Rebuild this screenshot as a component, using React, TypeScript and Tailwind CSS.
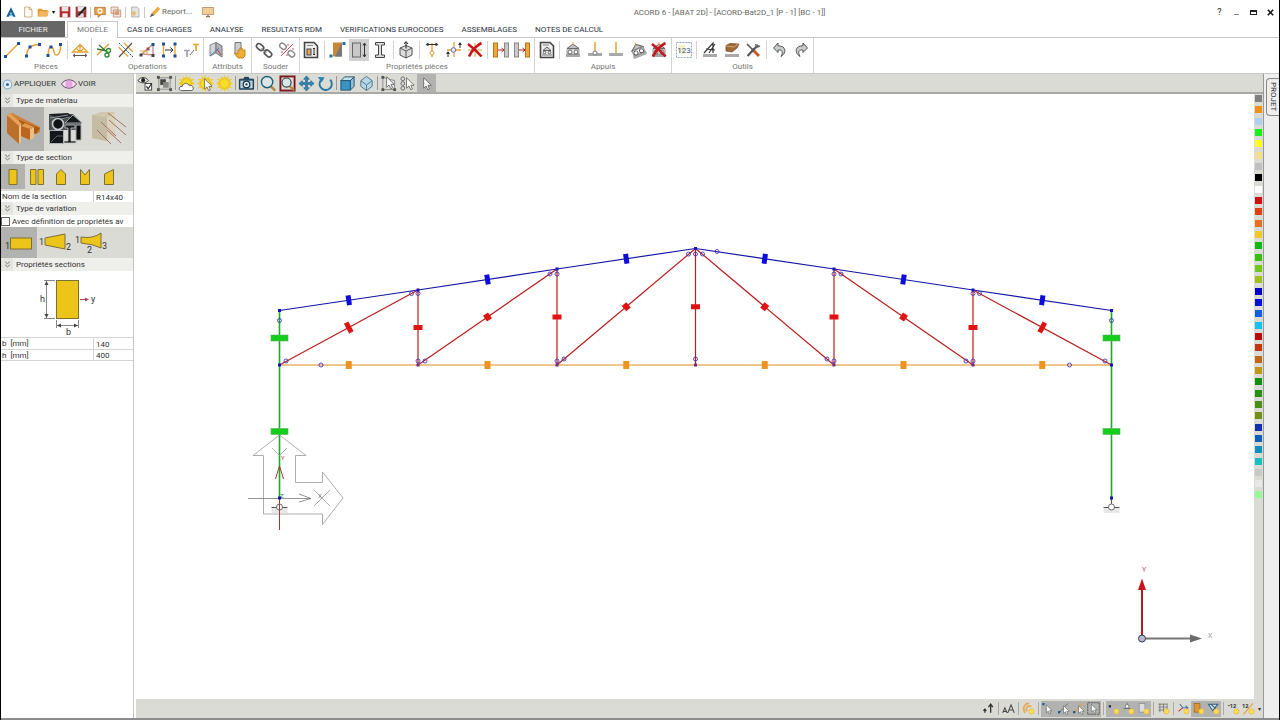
import React from 'react';

interface IconProps {
  children: React.ReactNode;
  size?: string;
}

// All toolbar drawings share an 18 unit grid
function Icon({ children, size = 'w-[18px] h-[18px]' }: IconProps) {
  return (
    <svg viewBox="0 0 18 18" className={`${size} shrink-0`} fill="none" aria-hidden="true">
      {children}
    </svg>
  );
}

const AMBER = '#e5a336';
const NAVY = '#1d4f9c';

function Dot({ x, y, c = NAVY }: { x: number; y: number; c?: string }) {
  return <rect x={x - 1.5} y={y - 1.5} width="3" height="3" fill={c} />;
}

function Bulb({ x = 13, y = 13 }: { x?: number; y?: number }) {
  return <circle cx={x} cy={y} r="3.6" fill="#ffdc58" stroke="#e2b030" strokeWidth="0.8" />;
}

const cursorPath = 'M0 0 V11 L2.6 8.6 L4.4 12.6 L6.2 11.8 L4.5 7.9 H8 Z';

function Cursor({ x, y }: { x: number; y: number }) {
  return <path d={cursorPath} transform={`translate(${x} ${y})`} fill="#fff" stroke="#555" strokeWidth="0.8" />;
}

function Ground({ y = 13 }: { y?: number }) {
  return <rect x="2" y={y} width="14" height="3" fill="#a9a9a9" />;
}

function Undo() {
  return <path d="M7 2 L2.5 7 L7 11.5 V9 C11 8.6 12.6 10.5 10 15.5 C16 11.5 15 4.8 7 4.8 Z" fill="#c9cccd" stroke="#555" />;
}

function RoofSupport() {
  return (
    <>
      <Ground />
      <path d="M9 3 L3 7.5 H15 Z" fill="#c2c2c2" stroke="#666" />
      <path d="M9 1 V4" stroke={AMBER} />
      <rect x="3" y="8" width="12" height="5" fill="#f4f4f4" stroke="#777" strokeWidth="0.7" />
      <circle cx="6" cy="11" r="2" fill="#fff" stroke="#555" strokeWidth="0.9" />
      <circle cx="12" cy="11" r="2" fill="#fff" stroke="#555" strokeWidth="0.9" />
    </>
  );
}

const redCross = <path d="M2 3 C6 6 11 10 15.5 15.5 M15.5 2 C10 5 6 9 3 15.5" stroke="#c8161b" strokeWidth="2.6" />;

interface Tool {
  name: string;
  art?: React.ReactNode;
  active?: boolean;
}

interface RibbonGroup {
  label: string;
  width: string;
  tools: Tool[];
}

const sep: Tool = { name: '' };

const ribbon: RibbonGroup[] = [
  {
    label: 'Pièces',
    width: 'w-[91px]',
    tools: [
      { name: 'Pièce droite', art: <><path d="M2.5 15.5 L15.5 2.5" stroke={AMBER} strokeWidth="1.5" /><Dot x={2.5} y={15.5} /><Dot x={15.5} y={2.5} /></> },
      { name: 'Pièce en arc', art: <><path d="M2.5 15 C3 7 8 3.5 15 3.5" stroke={AMBER} strokeWidth="1.5" /><Dot x={2.5} y={15} /><Dot x={6} y={6} /><Dot x={15.5} y={3.5} /></> },
      { name: 'Courbe', art: <><path d="M3 14 C4 2 8 5 9 11 C10 17 16 14 15.5 4" stroke={AMBER} strokeWidth="1.5" /><Dot x={3} y={14.5} /><Dot x={6} y={6} /><Dot x={15.5} y={3.5} /></> },
      sep,
      { name: 'Ferme', art: <><path d="M1.5 11 L9 3.5 L16.5 11 Z M9 3.5 V11 M5.5 7.5 L9 11 L12.5 7.5" stroke={AMBER} strokeWidth="1.3" /><path d="M2 14.5 H16 M4 13 L2 14.5 L4 16 M14 13 L16 14.5 L14 16" stroke="#555" /></> },
    ],
  },
  {
    label: 'Opérations',
    width: 'w-[112px]',
    tools: [
      { name: 'Couper', art: <><path d="M2 14 L14 3" stroke={AMBER} strokeWidth="1.5" /><path d="M4 4 L12 11 M2 8 L12 10" stroke="#367c35" strokeWidth="1.3" /><circle cx="13.5" cy="9.5" r="2" stroke="#2f8a35" strokeWidth="1.4" /><circle cx="12" cy="14" r="2" stroke="#2f8a35" strokeWidth="1.4" /></> },
      { name: 'Diviser', art: <><path d="M1.5 6 L11 15.5 M7 2 L16 11" stroke={AMBER} strokeWidth="1.3" /><path d="M2 16 L15 2" stroke="#555" strokeWidth="1.2" /><path d="M2 2 L16 16" stroke={NAVY} strokeDasharray="2 1" /></> },
      { name: 'Accrocher', art: <><path d="M4 13 L15 3 V14 Z" stroke="#b98b8d" strokeWidth="1.3" /><path d="M2 10 H9 V14" stroke={AMBER} /><Dot x={3} y={14} c="#444" /><Dot x={15} y={3.5} /><Dot x={15} y={14.5} c="#444" /><Dot x={10} y={8} c="#a54b55" /></> },
      { name: 'Étirer', art: <><path d="M3.5 2 V16 M15 2 V16" stroke={AMBER} strokeWidth="1.3" /><path d="M5 9 H13 M10.5 6.5 L13 9 L10.5 11.5" stroke="#333" /><Dot x={3.5} y={3} /><Dot x={3.5} y={15} /><Dot x={15} y={3} /><Dot x={15} y={15} /></> },
      { name: 'Copier les propriétés', art: <><path d="M2 9.5 H8 M5 9.5 V16" stroke="#a5a1b6" strokeWidth="1.7" /><path d="M11 3.5 H17 M14 3.5 V10" stroke={AMBER} strokeWidth="1.7" /><path d="M8 14 L12 9" stroke="#777" /></> },
    ],
  },
  {
    label: 'Attributs',
    width: 'w-[48px]',
    tools: [
      { name: 'Repère', art: <><path d="M3 4 L9 1.5 V12 L3 15 Z" fill="#d1d4d7" stroke="#888" /><path d="M9 1.5 L15 5 V16 L9 12 Z" fill="#aeb4bb" stroke="#777" /><path d="M3 15 L12 7" stroke="#367da7" /><path d="M10 8 L14 14" stroke="#cf3339" /></> },
      { name: 'Attribut', art: <><path d="M5 1.5 H11 V13 H5 Z" fill="#cdcdcd" stroke="#777" /><path d="M4 12 L8 13 V9 H10 V7 H12 V9 H15 V15 L13 17 H8 Z" fill="#efae35" stroke="#c58520" /></> },
    ],
  },
  {
    label: 'Souder',
    width: 'w-[48px]',
    tools: [
      { name: 'Souder', art: <><rect x="1" y="3.5" width="8" height="5" rx="2.5" transform="rotate(40 5 6)" stroke="#555" strokeWidth="1.7" /><rect x="9" y="10" width="8" height="5" rx="2.5" transform="rotate(40 13 12.5)" stroke="#555" strokeWidth="1.7" /><path d="M6.5 7.5 L11.5 11.5" stroke="#777" strokeWidth="1.5" /></> },
      { name: 'Dessouder', art: <><rect x="1" y="3" width="7" height="5" rx="2.5" transform="rotate(40 5 6)" stroke="#888" strokeWidth="1.4" /><rect x="10" y="10" width="7" height="5" rx="2.5" transform="rotate(40 13 12.5)" stroke="#888" strokeWidth="1.4" /><path d="M3 15 L15 3 M10 3 V5 M14 8 H16 M3 11 H5 M9 13 V15" stroke="#d64a57" /></> },
    ],
  },
  {
    label: 'Propriétés pièces',
    width: 'w-[235px]',
    tools: [
      { name: 'Fiche pièce', art: <><path d="M2.5 1.5 H12 L15.5 5 V16.5 H2.5 Z" fill="#eee" stroke="#444" strokeWidth="1.6" /><path d="M5 4.5 H11" stroke="#888" /><rect x="5" y="8" width="4" height="6" fill="#e5a65a" stroke="#444" /><path d="M12 7 V14 M11 8 L12 7 L13 8 M11 13 L12 14 L13 13" stroke="#333" /></> },
      sep,
      { name: 'Matériau', art: <><rect x="5" y="1.5" width="9" height="14" fill="#c9873c" /><path d="M14 1.5 V15.5 H7 Z" fill="#777" /><Dot x={3} y={15} c="#2574a8" /><Dot x={16} y={2.5} c="#2574a8" /></> },
      { name: 'Section', active: true, art: <><rect x="2.5" y="2" width="8" height="14" fill="#c8c8c8" stroke="#666" /><path d="M14.5 2 V16 M13 4.5 L14.5 2 L16 4.5 M13 13.5 L14.5 16 L16 13.5" stroke="#333" /></> },
      { name: 'Profil', art: <path d="M4.5 1.5 H13.5 V4 H10.5 V14 H13.5 V16.5 H4.5 V14 H7.5 V4 H4.5 Z" fill="#ddd" stroke="#444" /> },
      sep,
      { name: 'Orientation', art: <><path d="M3 7 L9 4.5 L15 7 V14 L9 17 L3 14 Z" fill="#ddd" stroke="#555" /><path d="M3 7 L9 10 L15 7 M9 10 V17" stroke="#555" /><path d="M9 7.5 V1 M7 3 L9 0.5 L11 3" stroke="#222" /></> },
      sep,
      { name: 'Relaxations', art: <><path d="M9 2 V16" stroke={AMBER} strokeWidth="1.4" /><path d="M4 3.5 H14" stroke="#333" /><path d="M5.5 1.5 L2.5 3.5 L5.5 5.5 Z M12.5 1.5 L15.5 3.5 L12.5 5.5 Z" fill="#333" /><circle cx="9" cy="12" r="2" fill="#fff" stroke={AMBER} /></> },
      { name: 'Excentrement', art: <><path d="M9 1 V16 M2 9 H16" stroke={AMBER} strokeWidth="1.3" /><path d="M3 11 V16 M15 2 V7" stroke="#333" /><path d="M1 13 L3 10 L5 13 Z M13 4 L15 1 L17 4 Z" fill="#333" /><circle cx="8.5" cy="9" r="2.3" fill="#e9e9f2" stroke="#6973a2" /></> },
      { name: 'Supprimer les relaxations', art: <><path d="M9 2 V16 M2 9 H16" stroke={AMBER} />{redCross}</> },
      sep,
      { name: 'Extrémité gauche', art: <><rect x="1.5" y="2" width="4" height="14" fill="#f0a83c" stroke="#b8741c" /><rect x="12.5" y="2" width="4" height="14" fill="#c9c9c9" stroke="#888" /><path d="M6 9 H12 M9.5 7 L12 9 L9.5 11" stroke="#b82228" /></> },
      { name: 'Extrémité droite', art: <><rect x="1.5" y="2" width="4" height="14" fill="#c9c9c9" stroke="#888" /><rect x="12.5" y="2" width="4" height="14" fill="#f0a83c" stroke="#b8741c" /><path d="M6 9 H12 M9.5 7 L12 9 L9.5 11" stroke="#b82228" /></> },
    ],
  },
  {
    label: 'Appuis',
    width: 'w-[137px]',
    tools: [
      { name: 'Fiche appui', art: <><path d="M2.5 1.5 H12 L15.5 5 V16.5 H2.5 Z" fill="#eee" stroke="#444" strokeWidth="1.6" /><path d="M5 4 H11" stroke="#888" /><path d="M9 6 L5 9.5 H13 Z" fill="#ccc" stroke="#444" strokeWidth="0.8" /><circle cx="6.5" cy="11.5" r="1.3" stroke="#444" strokeWidth="0.8" /><circle cx="11.5" cy="11.5" r="1.3" stroke="#444" strokeWidth="0.8" /><path d="M4 14 H14" stroke="#777" /></> },
      sep,
      { name: 'Appui simple', art: <RoofSupport /> },
      { name: 'Appui rotule', art: <><path d="M9 1 V12" stroke={AMBER} strokeWidth="1.5" /><Ground y={12} /><circle cx="9" cy="12" r="2" fill="#fff" stroke="#777" /></> },
      { name: 'Encastrement', art: <><path d="M9 1 V12" stroke={AMBER} strokeWidth="1.5" /><Ground y={12} /></> },
      { name: 'Appui incliné', art: <g transform="rotate(-22 9 9)"><RoofSupport /></g> },
      { name: 'Supprimer un appui', art: <><RoofSupport />{redCross}</> },
    ],
  },
  {
    label: 'Outils',
    width: 'w-[142px]',
    tools: [
      { name: 'Numérotation', art: <><rect x="1.5" y="1.5" width="15" height="15" stroke="#8ca6c4" strokeDasharray="2 1" /><path d="M3 4 H10 V13 H4 Z" fill="#f5efc8" /><text x="9" y="12" textAnchor="middle" fontSize="8" fontFamily="Roboto, sans-serif" fill="#33557d">123</text></> },
      sep,
      { name: 'Mesurer', art: <><Ground /><path d="M3 12 L12 2 V12 M5 8 L14 9 M8 12 L14 3" stroke="#333" strokeWidth="1.2" /></> },
      { name: 'Pièce au sol', art: <><Ground /><path d="M3 4.5 L7 2.5 L16 3 L14 7 L9 11 L3 10 Z" fill="#a36a39" stroke="#704520" strokeWidth="0.7" /><path d="M3 5 L11 6 L15 3" stroke="#d4a577" /></> },
      { name: 'Options', art: <><path d="M8 8 L15 15" stroke="#c75b2c" strokeWidth="3" /><path d="M3 3 L9 9" stroke="#555" strokeWidth="1.6" /><path d="M14 4 L3.5 15" stroke="#555" strokeWidth="2.2" /><path d="M11.5 3 L13 6 L16 5" stroke="#666" strokeWidth="1.5" /></> },
      sep,
      { name: 'Annuler', art: <Undo /> },
      { name: 'Rétablir', art: <g transform="matrix(-1 0 0 1 18 0)"><Undo /></g> },
    ],
  },
];

const sunRays = 'M9 0 L10.3 3.4 L13 1 L13 4.6 L17 4 L14.7 7 L18 9 L14.7 11 L17 14 L13 13.4 L13 17 L10.3 14.6 L9 18 L7.7 14.6 L5 17 L5 13.4 L1 14 L3.3 11 L0 9 L3.3 7 L1 4 L5 4.6 L5 1 L7.7 3.4 Z';
const sun = <><path d={sunRays} fill="#f0cc30" /><circle cx="9" cy="9" r="5" fill="#fbdc28" stroke="#dcb420" strokeWidth="0.6" /></>;

const viewTools: Tool[] = [
  { name: 'Visibilité', art: <><path d="M1 6 C4 1.5 9 1.5 12 6 C9 9 4 9 1 6 Z" fill="#f7f7f7" stroke="#333" /><circle cx="6.5" cy="5.5" r="2.2" fill="#222" /><rect x="8.5" y="9" width="7" height="7" fill="#fff" stroke="#444" /><path d="M10 12 L11.8 14.5 L15.5 9" stroke="#222" strokeWidth="1.2" /></> },
  { name: 'Isoler', art: <><rect x="3" y="3" width="12" height="12" stroke="#8a8a8a" /><rect x="4.5" y="4.5" width="6" height="6" fill="#444" /><rect x="7.5" y="7.5" width="6" height="6" fill="#888" /><Dot x={2.5} y={2.5} c="#555" /><Dot x={15.5} y={2.5} c="#555" /><Dot x={2.5} y={15.5} c="#555" /><Dot x={15.5} y={15.5} c="#555" /></> },
  sep,
  { name: 'Masquer', art: <>{sun}<path d="M4 16.5 C0 16.5 0.5 11.5 4.5 12 C5 8 11 8 11.5 11 C16 9.5 18 16.5 14 16.5 Z" fill="#fff" stroke="#555" /></> },
  { name: 'Afficher la sélection', art: <>{sun}<Cursor x={8} y={4} /></> },
  { name: 'Tout afficher', art: sun },
  sep,
  { name: 'Photo', art: <><path d="M1.5 4.5 H6 L7 2.5 H11 L12 4.5 H16.5 V15 H1.5 Z" fill="#214a68" stroke="#17364d" /><rect x="2.5" y="6" width="13" height="8" fill="#bcd0dd" /><circle cx="9" cy="10" r="3.5" fill="#e7eef3" stroke="#17364d" strokeWidth="1.4" /><circle cx="9" cy="10" r="1.2" fill="#17364d" /></> },
  sep,
  { name: 'Zoom', art: <><path d="M11.5 12 L16 16.5" stroke="#b28a37" strokeWidth="2.6" /><circle cx="7.5" cy="7.5" r="6" fill="#d9e6e7" stroke="#245f78" strokeWidth="1.5" /></> },
  { name: 'Zoom étendu', art: <><rect x="1.5" y="1.5" width="15" height="15" stroke="#7b171b" strokeWidth="2" /><path d="M11.5 12 L16 16" stroke="#b28a37" strokeWidth="2.4" /><circle cx="8" cy="8" r="4.8" fill="#d9e6e7" stroke="#333f49" strokeWidth="1.2" /></> },
  { name: 'Déplacer', art: <><path d="M9 1 L12 4.5 H10 V8 H13.5 V6 L17 9 L13.5 12 V10 H10 V13.5 H12 L9 17 L6 13.5 H8 V10 H4.5 V12 L1 9 L4.5 6 V8 H8 V4.5 H6 Z" fill="#3289b6" stroke="#205e80" strokeWidth="0.7" /></> },
  { name: 'Tourner', art: <><path d="M4 5.5 A6.5 6.5 0 1 0 14 5" stroke="#2376a3" strokeWidth="2" /><path d="M1 2 L8 2.5 L5 8 Z" fill="#2b82af" /></> },
  sep,
  { name: 'Vue 3D', art: <><path d="M2 6 L6 2 H16 L12 6 Z" fill="#c4e0ef" stroke="#23536f" /><path d="M12 6 L16 2 V12 L12 16 Z" fill="#8fc1da" stroke="#23536f" /><rect x="2" y="6" width="10" height="10" fill="#3a94c4" stroke="#23536f" /></> },
  { name: 'Vue isométrique', art: <><path d="M9 1.5 L15 6 V12 L9 16.5 L3 12 V6 Z" fill="#b8d6e3" stroke="#47778f" /><path d="M3 6 L9 10.5 L15 6 M9 10.5 V16" stroke="#47778f" /></> },
  sep,
  { name: 'Sélection polygone', art: <><path d="M3 2.5 L15.5 6 V15.5 H3 Z" stroke="#777" strokeWidth="0.8" /><Dot x={3} y={2.5} c="#555" /><Dot x={3} y={15.5} c="#555" /><Dot x={15.5} y={15.5} c="#555" /><Cursor x={7} y={2} /></> },
  { name: 'Sélection multiple', art: <><circle cx="4" cy="4" r="2" fill="#ddd" stroke="#666" /><circle cx="4" cy="9" r="2" fill="#ddd" stroke="#666" /><circle cx="4" cy="14" r="2" fill="#ddd" stroke="#666" /><Cursor x={8} y={3} /></> },
  { name: 'Sélection', active: true, art: <Cursor x={6} y={3} /> },
];

const statusTools: Tool[] = [
  { name: 'Décaler', art: <path d="M4 15 V10 M2 12 L4 10 L6 12 M12 15 V4 M9 7 L12 3 L15 7" stroke="#333" strokeWidth="1.8" /> },
  sep,
  { name: 'Taille du texte', art: <path d="M1 15 L4 8 L7 15 M2 13 H6 M8 15 L12.5 4 L17 15 M9.5 11 H15.5" stroke="#444" strokeWidth="1.4" /> },
  sep,
  { name: 'Main', art: <><path d="M4 15 C0 8 4 2 10 2 M7 13 C4 8 8 5 13 6" stroke="#e8a75a" strokeWidth="2.4" /><Bulb /></> },
  sep,
  { name: 'Accrochage point', active: true, art: <><Dot x={2} y={3} /><Cursor x={6} y={4} /></> },
  { name: 'Accrochage ligne', active: true, art: <><path d="M2 16 L15 2" stroke="#666" strokeWidth="1.3" /><Dot x={3} y={14} /><Cursor x={9} y={5} /></> },
  { name: 'Accrochage milieu', active: true, art: <><path d="M2 16 L15 2" stroke={AMBER} strokeWidth="1.6" /><Dot x={3} y={14} /><Cursor x={9} y={5} /></> },
  { name: 'Sélection fenêtre', active: true, art: <><rect x="1" y="1" width="16" height="16" stroke="#555" strokeWidth="1.3" strokeDasharray="3 1" /><Cursor x={6} y={3} /></> },
  sep,
  { name: 'Voir nœuds', active: true, art: <><Dot x={4} y={6} c="#222" /><Bulb /></> },
  { name: 'Voir appuis', active: true, art: <><path d="M7 1 V6 M2 9 H12" stroke="#555" /><circle cx="7" cy="6" r="2.5" fill="#fff" stroke="#666" /><Bulb /></> },
  { name: 'Voir sections', active: true, art: <><rect x="3" y="2" width="8" height="12" fill="#ddd" stroke="#888" /><Bulb /></> },
  sep,
  { name: 'Voir grille', art: <><path d="M2 3 H14 M2 7 H14 M2 11 H14 M4 2 V14 M9 2 V14 M14 2 V14" stroke="#666" /><Bulb /></> },
  sep,
  { name: 'Voir repères', art: <><path d="M4 3 L8 8 H15 M12 5 L15 8 L12 11" stroke="#4578a8" strokeWidth="1.6" /><path d="M8 8 L2 13" stroke="#c33" strokeWidth="1.4" /><Bulb /></> },
  { name: 'Voir matériaux', active: true, art: <><rect x="3" y="2" width="8" height="12" fill="#dc9638" stroke="#99621c" /><Bulb /></> },
  { name: 'Voir assemblages', active: true, art: <><path d="M2 3 H15 L8 12 Z M5 3 L12 9" fill="#d9e3e9" stroke="#31617d" strokeWidth="1.4" /><Bulb /></> },
  sep,
  { name: 'Numéros nœuds', art: <><text x="1" y="8" fontSize="8" fontWeight="bold" fontFamily="Roboto, sans-serif" fill="#333">•12</text><Bulb /></> },
  { name: 'Numéros pièces', art: <><path d="M2 17 L15 2" stroke={AMBER} strokeWidth="1.5" /><text x="0" y="8" fontSize="8" fontWeight="bold" fontFamily="Roboto, sans-serif" fill="#333">12</text><Bulb /></> },
];

const tabs = ['CAS DE CHARGES', 'ANALYSE', 'RESULTATS RDM', 'VERIFICATIONS EUROCODES', 'ASSEMBLAGES', 'NOTES DE CALCUL'];

const swatches = [
  '#808080', '#f09018', '#b0d0f0', '#18f018', '#ffff20', '#f0e090', '#c0c0c0', '#000000', '#ffffff',
  '#d01010', '#e04010', '#e87020', '#f0c828', '#10b810', '#38c010', '#70c818', '#a0c020', '#0000c8',
  '#0010d8', '#1060e0', '#18c0f0', '#b80808', '#c03810', '#c06818', '#c09818', '#109010', '#289010',
  '#489018', '#709018', '#1030b0', '#1060b8', '#1090c0', '#18c0c0', '#c8c8c8', '#e8e8e8', '#98f898',
];

function TitleBar() {
  const btn = 'w-4 h-4 flex items-center justify-center';
  const small = 'w-3 h-3';
  return (
    <header className="h-[21px] pt-[3px] flex items-center">
      <div className="flex items-center text-[#666]">
        <span className="w-[19px] flex justify-center">
          <Icon size={small}><path d="M9 2 L2 16 H6 L9 9 L12 16 H16 Z" fill="#1a5f8e" /><path d="M7 12 H11 L9 16 Z" fill="#20a7c5" /></Icon>
        </span>
        <button className={btn} aria-label="Nouveau"><Icon size={small}><path d="M4 1.5 H11 L15 5.5 V16.5 H4 Z M11 1.5 V5.5 H15" fill="#fffdf6" stroke="#b08b52" /></Icon></button>
        <button className="w-[14px] h-4 flex items-center justify-center" aria-label="Ouvrir"><Icon size={small}><path d="M1 4 H7 L9 6 H16 V15 H1 Z" fill="#e39a36" /><path d="M4 8 H18 L15 16 H1 Z" fill="#f2b55a" /></Icon></button>
        <span className="w-[7px] text-center text-[6px] leading-none text-black">▾</span>
        <button className={btn} aria-label="Enregistrer"><Icon size={small}><path d="M1 1 H17 V17 H1 Z" fill="#b3262c" /><rect x="4" y="1" width="10" height="7" fill="#e9e4e1" /><rect x="5" y="11" width="8" height="6" fill="#f4f4f4" /></Icon></button>
        <button className={btn} aria-label="Enregistrer sous"><Icon size={small}><path d="M1 1 H17 V17 H1 Z" fill="#9c3536" /><rect x="4" y="1" width="10" height="7" fill="#e9e4e1" /><rect x="5" y="11" width="8" height="6" fill="#ddd" /><path d="M5 14 L16 2" stroke="#222" strokeWidth="3" /></Icon></button>
        <span className="w-px h-[11px] mx-px bg-[#d6c4bb]" />
        <button className={btn} aria-label="Paramètres"><Icon size={small}><path d="M1 2 H17 V13 H11 L6 17 V13 H1 Z" fill="#e4a14b" stroke="#a66b28" /><circle cx="9" cy="7.5" r="3" stroke="#fff" strokeWidth="2" /></Icon></button>
        <button className={btn} aria-label="Copier"><Icon size={small}><path d="M1.5 1.5 H12 V11 H1.5 Z M5 6 H16 V16.5 H5 Z" fill="#f5e4da" stroke="#a7796b" /><path d="M7 9 H14 M7 12 H14" stroke="#e08c62" strokeWidth="2" /></Icon></button>
        <span className="w-px h-[11px] mx-px bg-[#d6c4bb]" />
        <button className={btn} aria-label="Importer"><Icon size={small}><path d="M4 1.5 H12 L15 5 V16.5 H4 Z" fill="#e4e4e4" stroke="#999" /><circle cx="7" cy="11" r="3.5" fill="#e9bd78" /></Icon></button>
        <span className="w-px h-[11px] mx-px bg-[#d6c4bb]" />
        <button className="h-4 flex items-center pl-[3px] text-[8px]">
          <Icon size={small}><path d="M4 11 L13 1 L17 4 L8 14 Z" fill="#f1a93b" /><path d="M4 11 L8 14 L1 17 Z" fill="#555" /></Icon>
          <span className="pl-px">Report...</span>
        </button>
        <button className="w-[32px] h-4 flex items-center justify-center" aria-label="Écran"><Icon size={small}><rect x="1" y="2" width="16" height="11" fill="#f1cd97" stroke="#ac7c45" /><path d="M6 16 H12 M9 13 V16" stroke="#8b7050" strokeWidth="2" /></Icon></button>
      </div>
      <h1 className="flex-1 pl-6 pt-px text-center text-[8px] text-[#666]">ACORD 6 - [ABAT 2D] - [ACORD-Bat2D_1 [P - 1] [BC - 1]]</h1>
      <div className="flex text-[9px] text-[#222]">
        <button className="w-[17px]" aria-label="Aide">?</button>
        <button className="w-[17px] flex items-center justify-center" aria-label="Réduire"><span className="w-[5px] h-px mt-1 bg-[#888]" /></button>
        <button className="w-[17px] flex items-center justify-center" aria-label="Agrandir"><span className="w-[7px] h-[5px] border border-t-2 border-[#222]" /></button>
        <button className="w-[17px] flex items-center justify-center" aria-label="Fermer"><Icon size="w-[7px] h-[7px]"><path d="M2 2 L16 16 M16 2 L2 16" stroke="#111" strokeWidth="4" /></Icon></button>
      </div>
    </header>
  );
}

function TabBar() {
  return (
    <nav className="h-[17px] flex items-stretch border-b border-[#c6c6c6] text-[8px] text-[#2b3442]">
      <button className="w-[64px] pt-px bg-[#666] text-[#eee]">FICHIER</button>
      <button className="w-[51px] ml-[2px] -mb-px border border-b-0 border-[#c6c6c6] bg-white text-[#777]">MODÈLE</button>
      {tabs.map((tab) => (
        <button key={tab} className="px-[9px] pt-px whitespace-nowrap">{tab}</button>
      ))}
    </nav>
  );
}

function Ribbon() {
  return (
    <div className="h-[36px] flex border-b border-[#c9c9c9] text-[#777]">
      {ribbon.map((group) => (
        <section key={group.label} aria-label={group.label} className={`${group.width} flex flex-col border-r border-[#d4d4d4]`}>
          <div className="h-6 flex items-center justify-evenly">
            {group.tools.map((tool, i) =>
              tool.art ? (
                <button
                  key={i}
                  aria-label={tool.name}
                  className={`w-[20px] h-[22px] flex items-center justify-center ${tool.active ? 'bg-[#d0d0d0]' : ''}`}
                >
                  <Icon>{tool.art}</Icon>
                </button>
              ) : (
                <span key={i} className="w-px h-[18px] mx-px bg-[#dccfd2]" />
              )
            )}
          </div>
          <p className="text-center text-[8px] leading-[12px]">{group.label}</p>
        </section>
      ))}
    </div>
  );
}

function PanelHeader({ children }: { children: React.ReactNode }) {
  return (
    <h2 className="h-[13px] flex items-center bg-[#efefec] text-[8px]">
      <span className="w-[12px] h-full mr-[3px] flex items-center justify-center bg-[#e4e4e0]">
        <Icon size="w-[7px] h-[7px]"><path d="M3 2 L9 7 L15 2 M3 10 L9 15 L15 10" stroke="#555" strokeWidth="2" /></Icon>
      </span>
      <span className="pt-px">{children}</span>
    </h2>
  );
}

const gold = { fill: '#ecc41a', stroke: '#7d7034' };

const sectionShapes = [
  { name: 'Rectangulaire', path: 'M5 1.5 H13 V16.5 H5 Z' },
  { name: 'Double', path: 'M2.5 1.5 H8 V16.5 H2.5 Z M10 1.5 H15.5 V16.5 H10 Z' },
  { name: 'Faîtage', path: 'M9 1.5 L13.5 6 V16.5 H4.5 V6 Z' },
  { name: 'Noue', path: 'M4.5 1.5 L9 7 L13.5 1.5 V16.5 H4.5 Z' },
  { name: 'Biaise', path: 'M4.5 6 L13.5 1.5 V16.5 H4.5 Z' },
];

function SidePanel() {
  return (
    <aside className="w-[133px] shrink-0 flex flex-col border-r border-[#c4c4c0] bg-white text-[8px] text-[#333]">
      <div className="h-[20px] flex items-center bg-[#dadbd5] text-[8px]">
        <button className="flex items-center">
          <span className="w-[13px] flex justify-center"><Icon size="w-[11px] h-[11px]"><circle cx="9" cy="9" r="7" fill="#e4eff6" stroke="#8ab4cf" strokeWidth="2" /><circle cx="9" cy="9" r="2.5" fill="#286a97" /></Icon></span>
          APPLIQUER
        </button>
        <button className="flex items-center pl-[5px]">
          <svg viewBox="0 0 16 10" className="w-4 h-[10px] mr-px" aria-hidden="true">
            <path d="M0.5 5 C4 -0.5 12 -0.5 15.5 5 C12 10.5 4 10.5 0.5 5 Z" fill="#f3e6f3" stroke="#66426f" />
            <circle cx="8" cy="5" r="3.6" fill="#eaa3e2" />
          </svg>
          VOIR
        </button>
      </div>

      <PanelHeader>Type de matériau</PanelHeader>
      <div className="h-[44px] flex bg-[#dadbd5]">
        <button aria-label="Bois" className="w-[43px] flex items-center justify-center bg-[#b2b3b1]">
          <svg viewBox="0 0 36 34" className="w-9 h-[34px]" aria-hidden="true">
            <path d="M3 2 L7 1 L35 15 V20 L31 22 L8 12 Z" fill="#cf8036" />
            <path d="M14 8 L35 16 L31 22 L26 20 L14 14 Z" fill="#a85a1c" />
            <path d="M2 3 L14 14 V32 L2 21 Z" fill="#bc6f29" />
            <path d="M14 14 L16 12 V30 L14 32 Z" fill="#f0c084" />
            <path d="M2 3 L5 1 L17 12 L14 14 Z" fill="#e6a358" />
            <path d="M16 14 L25 17 V28 L16 24 Z" fill="#b9651e" />
            <path d="M25 17 L29 15 V26 L25 28 Z" fill="#efbd80" />
            <path d="M16 14 L20 11 L29 15 L25 17 Z" fill="#e39c4d" />
          </svg>
        </button>
        <button aria-label="Acier" className="w-[43px] flex items-center justify-center">
          <svg viewBox="0 0 36 34" className="w-9 h-[34px]" aria-hidden="true">
            <path d="M1 2 H25 L33 11 V18 H1 Z" fill="#4b5052" />
            <path d="M1 2 L20 1 L25 5 L12 8 Z" fill="#1c2022" />
            <path d="M2 6 L20 3 M4 9 L22 5" stroke="#8f9596" />
            <rect x="1.5" y="18.5" width="14" height="13" fill="#14181b" stroke="#aeb3b4" />
            <path d="M3 30 L9 24 H15" stroke="#5c6163" fill="none" />
            <circle cx="10" cy="12" r="5.5" fill="#101316" stroke="#c8cccd" strokeWidth="1.6" />
            <path d="M17 11 L25 3 L34 11 Z" fill="#17191b" stroke="#9ca1a2" />
            <path d="M17 13 H27 V16 H23 V29 H28 V31 H16 V29 H20 V16 H17 Z" fill="#1a1d1f" stroke="#c8cccd" strokeWidth="0.8" />
            <path d="M28 13 H33 V28 H28 Z" fill="#0c0e10" stroke="#aaa" />
          </svg>
        </button>
        <button aria-label="Béton" className="w-[43px] flex items-center justify-center">
          <svg viewBox="0 0 36 34" className="w-9 h-[34px]" aria-hidden="true">
            <path d="M1 3 L10 0 H24 V22 L16 29 L1 26 Z" fill="#d0c7ae" />
            <path d="M1 3 L16 6 V29 L1 26 Z" fill="#c5bda3" />
            <path d="M16 6 L24 0 V22 L16 29 Z" fill="#dbd3bd" />
            <path d="M6 18 L20 32 M10 10 L25 24 M16 18 L30 31 M17 1 L35 15 M18 8 L35 23" stroke="#9d6654" strokeWidth="0.9" />
          </svg>
        </button>
      </div>

      <PanelHeader>Type de section</PanelHeader>
      <div className="h-[27px] flex bg-[#dadbd5]">
        {sectionShapes.map((shape, i) => (
          <button key={shape.name} aria-label={shape.name} className={`w-[24px] h-[25px] flex items-center justify-center ${i === 0 ? 'bg-[#b2b3b1]' : ''}`}>
            <Icon><path d={shape.path} {...gold} /></Icon>
          </button>
        ))}
      </div>
      <label className="h-[11px] flex items-center bg-white">
        <span className="w-[92px] pl-px pt-px">Nom de la section</span>
        <input defaultValue="R14x40" className="w-[40px] h-[11px] pl-[2px] pt-px border-l border-[#ccc] outline-none" />
      </label>

      <PanelHeader>Type de variation</PanelHeader>
      <label className="h-3 flex items-center whitespace-nowrap overflow-hidden bg-white">
        <input type="checkbox" className="appearance-none w-[9px] h-[9px] mr-[2px] shrink-0 border border-[#666] bg-white" />
        <span className="pt-px">Avec définition de propriétés av</span>
      </label>
      <div className="h-[31px] flex bg-[#dadbd5] text-[#333]">
        <button aria-label="Constante" className="w-[36px] flex items-center justify-center bg-[#b2b3b1]">
          <svg viewBox="0 0 34 24" className="w-[34px] h-6" fontSize="9" fontFamily="Roboto, sans-serif" aria-hidden="true">
            <text x="3" y="18" fill="#333">1</text>
            <rect x="8.5" y="7" width="21" height="11" {...gold} />
          </svg>
        </button>
        <button aria-label="Linéaire" className="w-[36px] flex items-center justify-center">
          <svg viewBox="0 0 34 24" className="w-[34px] h-6" fontSize="9" fontFamily="Roboto, sans-serif" aria-hidden="true">
            <text x="1" y="14" fill="#333">1</text>
            <path d="M7 7 L27 3 V18 L7 14 Z" {...gold} />
            <text x="28" y="19" fill="#333">2</text>
          </svg>
        </button>
        <button aria-label="Courbe" className="w-[36px] flex items-center justify-center">
          <svg viewBox="0 0 34 24" className="w-[34px] h-6" fontSize="9" fontFamily="Roboto, sans-serif" aria-hidden="true">
            <text x="1" y="12" fill="#333">1</text>
            <path d="M7 6 Q19 8 27 2 V17 Q19 13 7 12 Z" {...gold} />
            <text x="13" y="22" fill="#333">2</text>
            <text x="28" y="18" fill="#333">3</text>
          </svg>
        </button>
      </div>

      <PanelHeader>Propriétés sections</PanelHeader>
      <div className="h-[66px] flex justify-center">
        <svg viewBox="0 0 70 66" className="w-[70px] h-[66px]" fontSize="9" fontFamily="Roboto, sans-serif" aria-hidden="true">
          <rect x="24.5" y="9.5" width="22" height="38" {...gold} />
          <path d="M12 9.5 H23 M12 47.5 H23 M14.5 10 V47 M24.5 49 V57 M46.5 49 V57 M25 54.5 H46" stroke="#888" fill="none" />
          <path d="M14.5 10 l-2 4 h4 Z M14.5 47 l-2 -4 h4 Z M25 54.5 l4 -2 v4 Z M46 54.5 l-4 -2 v4 Z" fill="#444" />
          <path d="M48 28.5 H56" stroke="#a8485a" />
          <path d="M57 28.5 l-4 -2 v4 Z" fill="#a8485a" />
          <text x="8" y="31" fill="#333">h</text>
          <text x="59" y="31" fill="#333">y</text>
          <text x="34" y="64" fill="#333">b</text>
        </svg>
      </div>
      {[['b', '140'], ['h', '400']].map(([key, value]) => (
        <label key={key} className="h-3 flex items-center border-t border-[#d4d4d4] last:border-b">
          <span className="w-[92px] pl-px pt-px whitespace-pre">{key}  [mm]</span>
          <input defaultValue={value} className="w-[40px] h-full pl-[2px] pt-px border-l border-[#d4d4d4] outline-none" />
        </label>
      ))}
    </aside>
  );
}

function ViewToolbar() {
  return (
    <div className="h-[20px] flex items-center border-b-2 border-[#a9aaa6] bg-[#dadbd5]">
      {viewTools.map((tool, i) =>
        tool.art ? (
          <button key={i} aria-label={tool.name} className={`w-[19px] h-[18px] flex items-center justify-center ${tool.active ? 'bg-[#b2b3b1]' : ''}`}>
            <Icon size="w-[17px] h-[17px]">{tool.art}</Icon>
          </button>
        ) : (
          <span key={i} className="w-px h-[14px] mx-px bg-[#999]" />
        )
      )}
    </div>
  );
}

// Frame geometry, in drawing units
const topNodes = [[279.5, 310.5], [418, 290], [557, 269], [695.5, 248.5], [834, 269], [973, 290], [1111.5, 310.5]];
const CHORD_Y = 365;
const diagonals = [
  [279.5, 365, 418, 290, 5, 11],
  [418, 365, 557, 269, 6, 7],
  [557, 365, 695.5, 248.5, 6, 7],
  [834, 365, 695.5, 248.5, 6, 7],
  [973, 365, 834, 269, 6, 7],
  [1111.5, 365, 973, 290, 5, 11],
];
const hinges = [
  [418, 293.5], [418, 361], [557, 274], [557, 361], [695.5, 254], [695.5, 359], [834, 274], [834, 361], [973, 293.5], [973, 361],
  [286, 361], [411.5, 293.5], [425, 361], [550, 274], [564, 359], [688.5, 254],
  [1105, 361], [979.5, 293.5], [966, 361], [841, 274], [827, 359], [702.5, 254],
  [717, 251.5], [321, 365], [1069.5, 365], [279.5, 320.5], [1111.5, 320.5],
];

function Bar({ x1, y1, x2, y2, w, h, color, edge }: { x1: number; y1: number; x2: number; y2: number; w: number; h: number; color: string; edge: string }) {
  const cx = (x1 + x2) / 2;
  const cy = (y1 + y2) / 2;
  const angle = (Math.atan2(y2 - y1, x2 - x1) * 180) / Math.PI;
  return (
    <g>
      <line x1={x1} y1={y1} x2={x2} y2={y2} stroke={edge} strokeWidth="1.2" />
      <rect x={cx - w / 2} y={cy - h / 2} width={w} height={h} fill={color} transform={`rotate(${angle} ${cx} ${cy})`} />
    </g>
  );
}

function Support({ x }: { x: number }) {
  return (
    <g>
      <rect x={x - 8} y="508" width="16" height="5" fill="#e8e8e8" />
      <path d={`M${x} 498 V504 M${x - 8} 507.5 H${x + 8}`} stroke="#555" />
      <circle cx={x} cy="507" r="3" fill="#fff" stroke="#666" />
    </g>
  );
}

function ModelView() {
  return (
    <svg viewBox="136 94 1118 605" preserveAspectRatio="xMinYMin meet" className="w-full h-full" fill="none" fontFamily="Roboto, sans-serif" role="img" aria-label="Portique 2D">
      {[279.5, 1111.5].map((x) => (
        <g key={x}>
          <line x1={x} y1="310" x2={x} y2="498" stroke="#18ac28" strokeWidth="1.6" />
          <rect x={x - 8.5} y="335" width="17" height="6" fill="#12cf1c" stroke="#5fae5f" strokeWidth="0.6" />
          <rect x={x - 8.5} y="428.5" width="17" height="6" fill="#12cf1c" stroke="#5fae5f" strokeWidth="0.6" />
        </g>
      ))}

      {topNodes.slice(1).map(([x, y], i) => {
        const [px, py] = topNodes[i];
        return (
          <g key={x}>
            <Bar x1={px} y1={CHORD_Y} x2={x} y2={CHORD_Y} w={6} h={8} color="#ec9420" edge="#e08c1c" />
            <Bar x1={px} y1={py} x2={x} y2={y} w={5} h={10} color="#0c0cdc" edge="#1414a4" />
          </g>
        );
      })}
      {diagonals.map(([x1, y1, x2, y2, w, h]) => (
        <Bar key={`${x1}-${x2}`} x1={x1} y1={y1} x2={x2} y2={y2} w={w} h={h} color="#e01212" edge="#b81c1c" />
      ))}
      {topNodes.slice(1, 6).map(([x, y]) => (
        <Bar key={x} x1={x} y1={y} x2={x} y2={CHORD_Y} w={5} h={9} color="#e01212" edge="#c01c1c" />
      ))}

      {hinges.map(([x, y], i) => (
        <circle key={i} cx={x} cy={y} r="2" stroke="#4a34b4" strokeWidth="0.9" />
      ))}
      {topNodes.map(([x, y]) => (
        <g key={x}>
          <rect x={x - 1.5} y={y - 1.5} width="3" height="3" fill="#1212c4" />
          <rect x={x - 1.5} y={CHORD_Y - 1.5} width="3" height="3" fill={x < 280 || x > 1111 ? '#1212c4' : '#6c2c8c'} />
        </g>
      ))}

      {/* global axes at the origin */}
      <path d="M279.5 435 L306 455.5 H295.5 V482.5 H322.5 V472 L343 498 L322.5 524.5 V514 H263.5 V455.5 H253 Z" stroke="#999" strokeWidth="0.8" />
      <path d="M314 490 L330 506 M330 490 L314 506 M272 448 L279.5 455.5 L287 448" stroke="#999" strokeWidth="0.8" />
      <path d="M248 498.5 H311 M299 494 L311 498.5 L299 502" stroke="#777" strokeWidth="0.8" />

      <Support x={279.5} />
      <Support x={1111.5} />

      <path d="M279.5 498 V530 M275.5 479 L279.5 466 L283.5 479" stroke="#a43a30" />
      <text x="281" y="460" fontSize="6" fill="#a8484a">Y</text>
      <text x="318" y="498" fontSize="6" fill="#888">X</text>
      <text x="280" y="498" fontSize="6" fill="#2a7a70">Z</text>
      <rect x="278" y="496.5" width="3" height="3" fill="#1212a4" />
      <rect x="1110" y="496.5" width="3" height="3" fill="#1212a4" />

      {/* view axes */}
      <path d="M1142 638 V588" stroke="#b81820" strokeWidth="2" />
      <path d="M1142 578.5 L1146 590 H1138 Z" fill="#c8141c" />
      <path d="M1142 638.5 H1192" stroke="#777" strokeWidth="2" />
      <path d="M1202 638.5 L1190 634.5 V642.5 Z" fill="#6c6c6c" />
      <circle cx="1142" cy="638.5" r="3.5" fill="#b4bad0" stroke="#3a3c5c" />
      <text x="1142" y="572" fontSize="7" fill="#b8686c">Y</text>
      <text x="1208" y="638" fontSize="7" fill="#999">X</text>
    </svg>
  );
}

function StatusToolbar() {
  return (
    <footer className="h-[19px] flex items-center justify-end bg-[#dadbd5]">
      {statusTools.map((tool, i) =>
        tool.art ? (
          <button key={i} aria-label={tool.name} className={`w-[15px] h-[16px] flex items-center justify-center ${tool.active ? 'bg-[#b2b3b1]' : ''}`}>
            <Icon size="w-[13px] h-[13px]">{tool.art}</Icon>
          </button>
        ) : (
          <span key={i} className="w-px h-[13px] mx-[2px] bg-[#b0a79e]" />
        )
      )}
      <span className="w-[7px] text-center text-[6px] text-[#333]">▾</span>
    </footer>
  );
}

export default function App() {
  return (
    <div className="h-screen flex flex-col overflow-hidden border-x border-black bg-white font-['Roboto','Noto_Sans',sans-serif] leading-none">
      <TitleBar />
      <TabBar />
      <Ribbon />
      <div className="flex-1 min-h-0 flex border-b-2 border-[#8c8c8c]">
        <SidePanel />
        <main className="flex-1 min-w-0 ml-[2px] flex flex-col border-r border-[#999]">
          <ViewToolbar />
          <div className="flex-1 min-h-0 flex">
            <div className="flex-1 min-w-0">
              <ModelView />
            </div>
            <div className="w-[9px] bg-[#dadbd5] pt-px">
              <div className="h-[404px] flex flex-col items-center justify-between">
                {swatches.map((color) => (
                  <button key={color} aria-label={`Couleur ${color}`} className="w-[7px] h-[7px]" style={{ backgroundColor: color }} />
                ))}
              </div>
            </div>
          </div>
          <StatusToolbar />
        </main>
        <div className="w-[15px] pt-[4px] pl-[2px] bg-[#eeeeee]">
          <button className="h-[38px] w-full flex items-center justify-center border border-r-0 border-[#888] rounded-l-sm text-[8px] text-[#333] [writing-mode:vertical-rl]">PROJET</button>
        </div>
      </div>
    </div>
  );
}
